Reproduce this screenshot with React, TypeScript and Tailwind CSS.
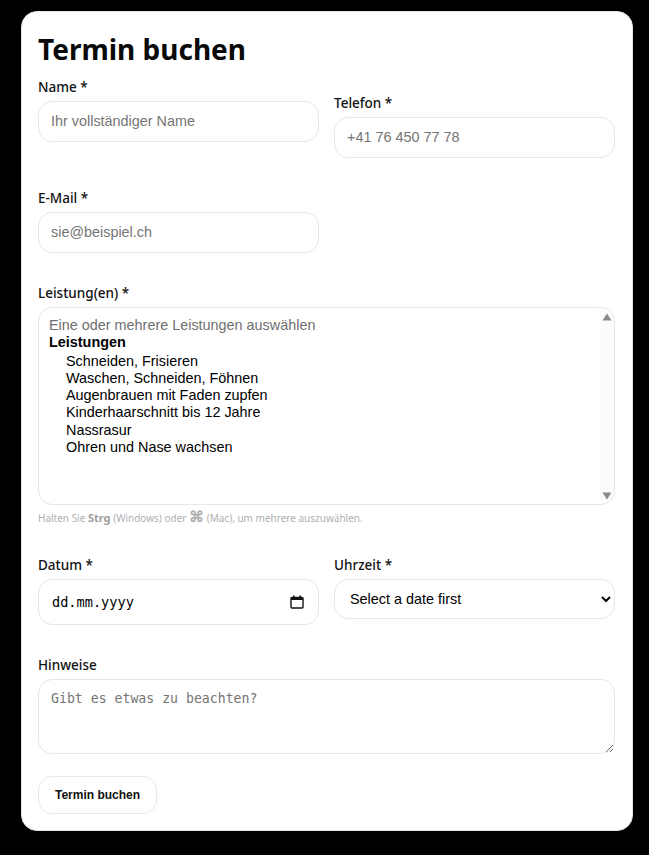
import React from "react";

const sans = "font-['Liberation_Sans',Arial,sans-serif]";
const labelCls = "block h-[19px] mb-[4px] font-['Noto_Sans',sans-serif] text-[13.5px] leading-[18px] font-medium text-[#111]";
const inputCls = `block w-full h-[41px] rounded-[14px] border border-[#e5e7eb] bg-white px-[12px] pb-[2px] text-[14.4px] text-black placeholder:text-[#757575] outline-none ${sans}`;

export default function App() {
  return (
    <div className="min-h-[855px] bg-black pt-[11px] pl-[21px] pr-[16px] pb-[24px]">
      <div className="rounded-[16px] border border-[#e5e5e5] bg-white pl-[16px] pr-[17px] pt-[16px] pb-[16px]">
        <h1 className="h-[50px] font-['Noto_Sans',sans-serif] text-[28px] leading-[42px] font-bold text-[#0a0a0a]">Termin buchen</h1>
        <form className="grid grid-cols-2 gap-x-[15px] gap-y-[31px]">
          <div>
            <label className={labelCls}>Name *</label>
            <input className={inputCls} placeholder="Ihr vollständiger Name" />
          </div>
          <div className="mt-4">
            <label className={labelCls}>Telefon *</label>
            <input className={inputCls} placeholder="+41 76 450 77 78" />
          </div>
          <div>
            <label className={labelCls}>E-Mail *</label>
            <input className={inputCls} placeholder="sie@beispiel.ch" />
          </div>
          <div />
          <div className="col-span-2">
            <label className={labelCls}>Leistung(en) *</label>
            <div className="relative">
              <div className={`h-[198px] rounded-[14px] border border-[#e5e7eb] bg-white px-[10px] pt-[9px] text-[14.4px] leading-[17.2px] text-black ${sans}`}>
                <div className="text-[#6f6f6f]">Eine oder mehrere Leistungen auswählen</div>
                <div className="font-bold">Leistungen</div>
                <ul className="mt-[1.4px] pl-[17px]">
                  <li>Schneiden, Frisieren</li>
                  <li>Waschen, Schneiden, Föhnen</li>
                  <li>Augenbrauen mit Faden zupfen</li>
                  <li>Kinderhaarschnitt bis 12 Jahre</li>
                  <li>Nassrasur</li>
                  <li>Ohren und Nase wachsen</li>
                </ul>
              </div>
              <div className="absolute right-[1px] top-[1px] bottom-[1px] flex w-[15px] flex-col items-center justify-between rounded-r-[14px] bg-[#fcfcfc] pt-[5px] pb-[4px]">
                <svg width="10" height="8" viewBox="0 0 10 8"><path d="M5 0.5 L9.5 7.5 H0.5 Z" fill="#8a8a8a" /></svg>
                <svg width="10" height="8" viewBox="0 0 10 8"><path d="M0.5 0.5 H9.5 L5 7.5 Z" fill="#8a8a8a" /></svg>
              </div>
            </div>
            <p className="mt-[4px] h-[16px] font-['Noto_Sans',sans-serif] text-[10px] leading-[14px] text-[#b0b0b0]">
              Halten Sie <strong className="text-[11px] font-bold text-[#a0a0a0]">Strg</strong> (Windows) oder <span className="text-[15px] leading-[14px] font-bold">⌘</span> (Mac), um mehrere auszuwählen.
            </p>
          </div>
          <div>
            <label className={labelCls}>Datum *</label>
            <div className="flex h-[46px] items-center justify-between rounded-[14px] border border-[#e5e7eb] bg-white pl-[13px] pr-[14px] font-['DejaVu_Sans_Mono',monospace] text-[13.6px] text-black">
              <span>dd.mm.yyyy</span>
              <svg width="14" height="14" viewBox="0 0 14 14" fill="none">
                <path d="M1 3.5 a1 1 0 0 1 1-1 h10 a1 1 0 0 1 1 1 v8.5 a1 1 0 0 1-1 1 h-10 a1 1 0 0 1-1-1 Z" stroke="#111" strokeWidth="1.4" />
                <rect x="1" y="2.5" width="12" height="2.5" fill="#111" />
                <rect x="3" y="0.5" width="1.6" height="2.5" fill="#111" />
                <rect x="9.4" y="0.5" width="1.6" height="2.5" fill="#111" />
              </svg>
            </div>
          </div>
          <div>
            <label className={labelCls}>Uhrzeit *</label>
            <select className={`block h-[40px] w-full rounded-[14px] border border-[#e5e7eb] bg-white px-[11px] text-[14.4px] text-black outline-none ${sans}`}>
              <option>Select a date first</option>
            </select>
          </div>
          <div className="col-span-2">
            <label className={labelCls}>Hinweise</label>
            <textarea className="block h-[75px] w-full rounded-[14px] border border-[#e5e7eb] bg-white px-[12px] pt-[11px] pb-[9px] font-['DejaVu_Sans_Mono',monospace] text-[13.2px] leading-[16px] text-black outline-none placeholder:text-[#757575]" placeholder="Gibt es etwas zu beachten?" />
            <button type="button" className={`mt-[22px] block h-[38px] w-[119px] rounded-[14px] border border-[#e9e9e9] bg-white text-[12px] font-bold text-[#111] ${sans}`}>Termin buchen</button>
          </div>
        </form>
      </div>
    </div>
  );
}
